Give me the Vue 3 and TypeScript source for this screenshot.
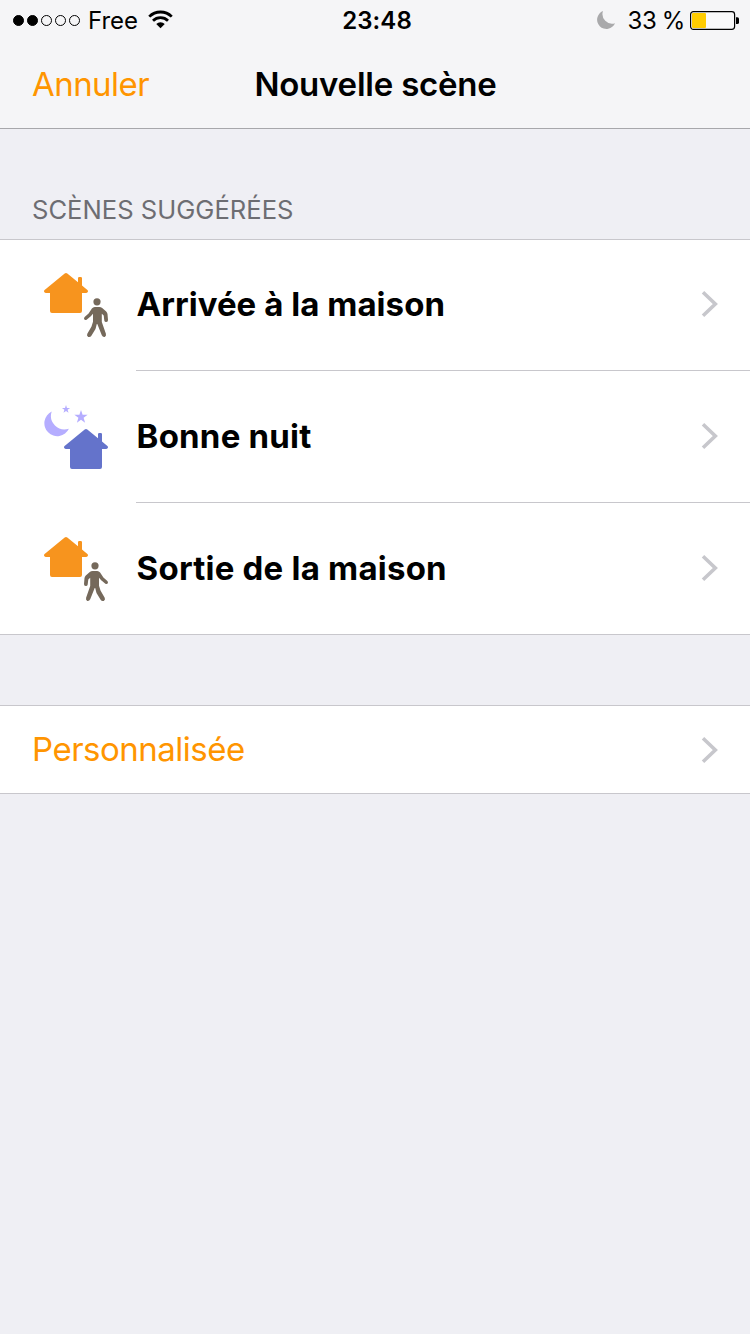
<script setup lang="ts">
type IconKind = 'arrive' | 'night' | 'leave'

interface Scene {
  icon: IconKind
  label: string
}

const scenes: Scene[] = [
  { icon: 'arrive', label: 'Arrivée à la maison' },
  { icon: 'night', label: 'Bonne nuit' },
  { icon: 'leave', label: 'Sortie de la maison' },
]

const signal: boolean[] = [true, true, false, false, false]

const house =
  'M21.7 1.5Q23 .5 24.3 1.5L35 10.2V6.2Q35 5 36.2 5H37.8Q39 5 39 6.2V13.5L44.4 18Q45.2 18.8 45 19.6Q44.6 21 43.2 21H39V39Q39 41 37 41H9Q7 41 7 39V21H2.8Q1.4 21 1 19.6Q.8 18.8 1.6 18Z'

function star(cx: number, cy: number, r: number): string {
  return Array.from({ length: 10 }, (_, i) => {
    const radius = i % 2 === 0 ? r : r * 0.39
    const angle = (Math.PI / 5) * i - Math.PI / 2
    return `${(cx + radius * Math.cos(angle)).toFixed(2)},${(cy + radius * Math.sin(angle)).toFixed(2)}`
  }).join(' ')
}

const stars: string[] = [star(23, 5.3, 4.3), star(38, 13, 7)]
</script>

<template>
  <div class="screen">
    <header class="top">
      <div class="status">
        <div class="carrier">
          <span class="dots">
            <i v-for="(on, i) in signal" :key="i" class="dot" :class="{ on }"></i>
          </span>
          <span class="network">Free</span>
          <svg class="wifi" width="25" height="20" viewBox="0 0 26 20">
            <g fill="none" stroke="#000" stroke-width="2.9">
              <path d="M1.3 6.5A16.6 16.6 0 0 1 24.7 6.5" />
              <path d="M5.2 10.7A11.2 11.2 0 0 1 20.8 10.7" />
            </g>
            <path d="M8.6 14.1A6.4 6.4 0 0 1 17.4 14.1L13 18.6Z" />
          </svg>
        </div>
        <span class="time">23:48</span>
        <div class="power">
          <svg class="dnd" width="20" height="20" viewBox="0 0 20 20">
            <path d="M7 1A9.3 9.3 0 1 0 19 13.2A9.6 9.6 0 0 1 7 1Z" fill="#a9a9ab" />
          </svg>
          <span class="percent">33 %</span>
          <svg class="battery" width="50" height="20" viewBox="0 0 50 20">
            <rect x=".6" y="1.6" width="44" height="17.8" rx="2.8" fill="#fff" stroke="#000" stroke-width="1.2" fill-opacity=".4" />
            <rect x="2" y="3" width="14" height="15" rx="1" fill="#fc0" />
            <path d="M46 7.2h1.4Q49 7.2 49 8.8v3.6Q49 14 47.4 14H46Z" />
          </svg>
        </div>
      </div>
      <nav class="bar">
        <span class="cancel">Annuler</span>
        <h1 class="title">Nouvelle scène</h1>
      </nav>
    </header>

    <h2 class="section">SCÈNES SUGGÉRÉES</h2>

    <ul class="group">
      <li v-for="scene in scenes" :key="scene.icon" class="row">
        <svg class="icon" width="66" height="66" viewBox="0 0 66 66">
          <template v-if="scene.icon === 'night'">
            <path
              d="M8.7 7.6A12.9 12.9 0 1 0 25.9 24.8A13.6 13.6 0 0 1 8.7 7.6Z"
              fill="#b5adff"
            />
            <polygon v-for="points in stars" :key="points" :points="points" fill="#b5adff" />
            <path :d="house" transform="translate(20 24)" fill="#6473cb" />
          </template>
          <template v-else>
            <path :d="house" fill="#f7941e" />
            <g :transform="scene.icon === 'leave' ? 'translate(106 0) scale(-1 1)' : undefined">
              <circle cx="54" cy="29.8" r="3.6" fill="#75695b" />
              <path
                d="M51.8 35H56.3Q58 35 59.2 36L63.2 39.4Q64.3 40.5 64.5 42L65 48Q65.1 49.9 63.3 50Q61.6 50.1 61.3 48.5L60.7 43.6L58.8 41.8V50L62.9 61.8Q63.5 64.1 61.7 64.9Q59.8 65.3 58.8 63.3L54.3 52H53.8L52.5 57L48.4 63.8Q47.2 65.6 45.2 64.9Q43.3 63.8 44.3 61.8L48.5 54.5L50 49.8V41.8L47.8 44.2L43.6 47.7Q42.1 48.6 41.2 47.3Q40.5 45.8 41.9 44.8L45.6 41.5L48.9 36.6Q50 35 51.8 35Z"
                fill="#75695b"
              />
            </g>
          </template>
        </svg>
        <div class="cell">
          <span class="label" :class="scene.icon">{{ scene.label }}</span>
          <svg class="chevron" width="18" height="28" viewBox="0 0 18 28">
            <path d="M2 2.3L14.3 14L2 25.7" fill="none" stroke="#c7c7cc" stroke-width="3.6" />
          </svg>
        </div>
      </li>
    </ul>

    <div class="group custom">
      <span class="custom-label">Personnalisée</span>
      <svg class="chevron" width="18" height="28" viewBox="0 0 18 28">
        <path d="M2 2.3L14.3 14L2 25.7" fill="none" stroke="#c7c7cc" stroke-width="3.6" />
      </svg>
    </div>
  </div>
</template>

<style>
body {
  background: #efeff4;
}
</style>

<style scoped>
.screen {
  width: 750px;
  height: 1334px;
  overflow: hidden;
  background: #efeff4;
  color: #000;
  font-family: Inter, 'Liberation Sans', sans-serif;
  white-space: nowrap;
}
.top {
  box-sizing: border-box;
  height: 129px;
  background: #f5f5f7;
  border-bottom: 1px solid #a7a7ab;
}
.status {
  display: grid;
  grid-template-columns: 1fr auto 1fr;
  align-items: center;
  height: 40px;
  padding: 0 10px 0 13px;
  font-size: 24px;
}
.carrier,
.power {
  display: flex;
  align-items: center;
}
.power {
  justify-content: flex-end;
}
.dots {
  display: flex;
  gap: 3px;
}
.dot {
  box-sizing: border-box;
  width: 11px;
  height: 11px;
  border: 1px solid #000;
  border-radius: 50%;
}
.dot.on {
  background: #000;
}
.network {
  margin-left: 8px;
}
.wifi {
  margin-left: 10px;
}
.time {
  padding-left: 1px;
  font-weight: 600;
  letter-spacing: 0.1px;
}
.percent {
  margin: 0 5px 0 11px;
  letter-spacing: -0.3px;
  word-spacing: -1.2px;
}
.bar {
  display: grid;
  grid-template-columns: 1fr auto 1fr;
  align-items: center;
  height: 88px;
  padding: 0 32px;
}
.cancel {
  color: #ff9500;
  font-size: 33px;
  letter-spacing: -0.55px;
}
.title {
  margin: 0;
  padding-left: 1px;
  font-size: 33px;
  font-weight: 600;
  letter-spacing: -0.22px;
}
.section {
  display: flex;
  align-items: flex-end;
  box-sizing: border-box;
  height: 110px;
  margin: 0;
  padding: 0 32px 13px;
  color: #6d6d72;
  font-size: 25.6px;
  font-weight: 400;
  line-height: 32px;
}
.group {
  margin: 0;
  padding: 0;
  list-style: none;
  background: #fff;
  border-top: 1px solid #c8c7cc;
  border-bottom: 1px solid #c8c7cc;
}
.row {
  display: flex;
  align-items: center;
  height: 132px;
  padding-left: 43px;
}
.row:first-child,
.row:last-child {
  height: 131px;
}
.icon {
  flex: none;
}
.row:first-child .icon {
  margin-bottom: 1px;
}
.cell {
  display: flex;
  flex: 1;
  align-items: center;
  justify-content: space-between;
  box-sizing: border-box;
  height: 100%;
  margin-left: 27px;
  padding: 0 31px 2px 0;
  border-bottom: 1px solid #c8c7cc;
}
.row:last-child .cell {
  border-bottom: 0;
}
.label {
  padding-left: 0.6px;
  font-size: 33px;
  font-weight: 700;
  letter-spacing: 0.22px;
}
.label.arrive {
  letter-spacing: 0.04px;
}
.custom {
  display: flex;
  align-items: center;
  justify-content: space-between;
  height: 87px;
  margin-top: 70px;
  padding: 0 31px 0 32px;
}
.custom-label {
  padding-bottom: 2px;
  color: #ff9500;
  font-size: 33px;
  letter-spacing: -0.5px;
}
</style>
